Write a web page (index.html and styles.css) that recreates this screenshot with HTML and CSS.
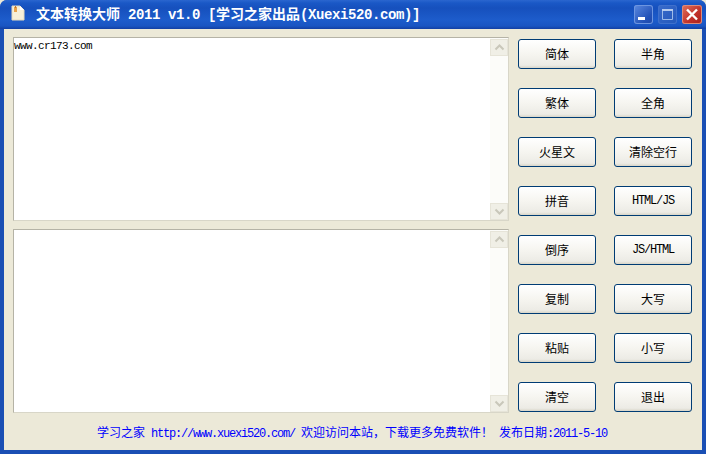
FILE: index.html
```html
<!DOCTYPE html>
<html lang="zh">
<head>
<meta charset="utf-8">
<title>文本转换大师</title>
<link rel="stylesheet" href="styles.css">
</head>
<body>
<div class="window">
  <header class="titlebar">
    <svg class="appicon" width="14" height="16" viewBox="0 0 14 16">
      <path d="M1 1h8l4 4v10H1z" fill="#f6efd8" stroke="#e4d9bc" stroke-width="1"/>
      <path d="M9 1v4h4z" fill="#fff"/>
      <rect x="3" y="2" width="3" height="5" fill="#e8a24a"/>
      <rect x="4" y="1" width="1" height="2" fill="#b9752c"/>
    </svg>
    <h1 class="title">文本转换大师<span class="lat"> 2011 v1.0 [</span>学习之家出品<span class="lat">(Xuexi520.com)]</span></h1>
    <div class="controls">
      <div class="ctl ctl-min"><svg width="19" height="19" viewBox="0 0 19 19"><rect x="4" y="12" width="7" height="3" fill="#fff"/></svg></div>
      <div class="ctl ctl-max"><svg width="19" height="19" viewBox="0 0 19 19"><path d="M4.5 5.5h10v9h-10z" fill="none" stroke="#9dbbe8"/><rect x="4" y="4" width="11" height="2" fill="#b5cbee"/></svg></div>
      <div class="ctl ctl-close"><svg width="20" height="19" viewBox="0 0 20 19"><path d="M5 4.5l10 10M15 4.5l-10 10" stroke="#fff" stroke-width="2.4" fill="none"/></svg></div>
    </div>
  </header>
  <main class="client">
    <div class="workspace">
      <div class="editors">
        <div class="editor">
          <div class="editor-text">www.cr173.com</div>
          <div class="scroll">
            <div class="arrow"><svg width="11" height="7" viewBox="0 0 11 7"><path d="M1.5 5.5l4-4 4 4" fill="none" stroke="#c9c7ba" stroke-width="2"/></svg></div>
            <div class="arrow"><svg width="11" height="7" viewBox="0 0 11 7"><path d="M1.5 1.5l4 4 4-4" fill="none" stroke="#c9c7ba" stroke-width="2"/></svg></div>
          </div>
        </div>
        <div class="editor">
          <div class="editor-text"></div>
          <div class="scroll">
            <div class="arrow"><svg width="11" height="7" viewBox="0 0 11 7"><path d="M1.5 5.5l4-4 4 4" fill="none" stroke="#c9c7ba" stroke-width="2"/></svg></div>
            <div class="arrow"><svg width="11" height="7" viewBox="0 0 11 7"><path d="M1.5 1.5l4 4 4-4" fill="none" stroke="#c9c7ba" stroke-width="2"/></svg></div>
          </div>
        </div>
      </div>
      <div class="buttons">
        <button class="btn">简体</button>
        <button class="btn">半角</button>
        <button class="btn">繁体</button>
        <button class="btn">全角</button>
        <button class="btn">火星文</button>
        <button class="btn">清除空行</button>
        <button class="btn">拼音</button>
        <button class="btn btn-lat">HTML/JS</button>
        <button class="btn">倒序</button>
        <button class="btn btn-lat">JS/HTML</button>
        <button class="btn">复制</button>
        <button class="btn">大写</button>
        <button class="btn">粘贴</button>
        <button class="btn">小写</button>
        <button class="btn">清空</button>
        <button class="btn">退出</button>
      </div>
    </div>
    <footer class="status">学习之家<span class="mono"> http://www.xuexi520.com/ </span>欢迎访问本站，下载更多免费软件！<span class="mono"> </span>发布日期<span class="mono">:2011-5-10</span></footer>
  </main>
</div>
</body>
</html>
```

FILE: styles.css
```css
html, body {
  margin: 0;
  padding: 0;
  background: #ece9d8;
}
.window {
  width: 706px;
  height: 454px;
  box-sizing: border-box;
  display: flex;
  flex-direction: column;
  background: #1a4fb4;
  padding: 0 4px 4px;
  border-radius: 7px 7px 0 0;
  overflow: hidden;
  font-family: "Noto Sans CJK SC", "Liberation Sans", sans-serif;
  font-size: 12px;
}
.titlebar {
  height: 29px;
  flex: none;
  margin: 0 -4px;
  padding: 0 4px 0 8px;
  display: flex;
  align-items: center;
  background: linear-gradient(180deg, #2a66cf 0, #1a58c6 3px, #1650bd 8px, #1d5ccb 20px, #1a55c2 26px, #123fa3 29px);
}
.appicon {
  flex: none;
  margin: -3px 0 0 3px;
}
.title {
  margin: -2px 0 0 11px;
  flex: 1;
  font-size: 14px;
  line-height: 16px;
  font-weight: 700;
  color: #fff;
  white-space: pre;
}
.lat {
  font-family: "Liberation Mono", monospace;
  font-size: 14px;
  letter-spacing: -0.4px;
}
.controls {
  display: flex;
  gap: 5px;
  margin-top: -1px;
}
.ctl {
  width: 19px;
  height: 19px;
  border-radius: 3px;
  box-sizing: border-box;
  display: flex;
}
.ctl-min {
  background: linear-gradient(135deg, #5c8ae0, #2352b8 70%, #1f48a8);
  box-shadow: inset 0 0 0 1px #6d95e0;
}
.ctl-max {
  background: linear-gradient(135deg, #3a6ccb, #2458bb);
  box-shadow: inset 0 0 0 1px #3f70cc;
}
.ctl-close {
  width: 20px;
  background: linear-gradient(135deg, #e0735c, #c0302a 60%, #a8201c);
  box-shadow: inset 0 0 0 1px #dc8a7a;
}
.client {
  flex: 1;
  min-height: 0;
  background: #ece9d8;
  display: flex;
  flex-direction: column;
  padding: 8px 10px 0 9px;
}
.workspace {
  display: flex;
  gap: 9px;
}
.editors {
  width: 496px;
  flex: none;
  display: flex;
  flex-direction: column;
  gap: 8px;
}
.editor {
  height: 184px;
  box-sizing: border-box;
  border: 1px solid #b5b3a6;
  border-right-color: #d8d6c8;
  border-bottom-color: #d8d6c8;
  background: #fff;
  display: flex;
}
.editor-text {
  flex: 1;
  padding: 2px 0 0 0;
  font-family: "Liberation Mono", monospace;
  font-size: 11px;
  letter-spacing: -0.6px;
  line-height: 13px;
  color: #000;
}
.scroll {
  width: 18px;
  flex: none;
  background: #fcfcf9;
  display: flex;
  flex-direction: column;
  justify-content: space-between;
  padding-top: 1px;
}
.arrow {
  height: 17px;
  box-sizing: border-box;
  border: 1px solid #e6e4d8;
  background: #f0efe6;
  display: flex;
  align-items: center;
  justify-content: center;
}
.buttons {
  margin-top: 2px;
  display: grid;
  grid-template-columns: 78px 78px;
  grid-auto-rows: 30px;
  column-gap: 18px;
  row-gap: 19px;
  align-content: start;
}
.btn {
  margin: 0;
  padding: 0 0 1px;
  border: 1px solid #003c74;
  border-radius: 3px;
  background: linear-gradient(180deg, #fff 0, #f6f5f0 50%, #ecebe5 90%, #d8d5c8 100%);
  font: inherit;
  font-size: 12px;
  color: #000;
}
.btn-lat {
  font-family: "Liberation Mono", monospace;
  letter-spacing: -1.2px;
}
.status {
  margin-top: 11px;
  padding-left: 84px;
  line-height: 16px;
  color: #0000ff;
  white-space: pre;
}
.mono {
  font-family: "Liberation Mono", monospace;
  font-size: 12px;
  letter-spacing: -1.2px;
}
```
